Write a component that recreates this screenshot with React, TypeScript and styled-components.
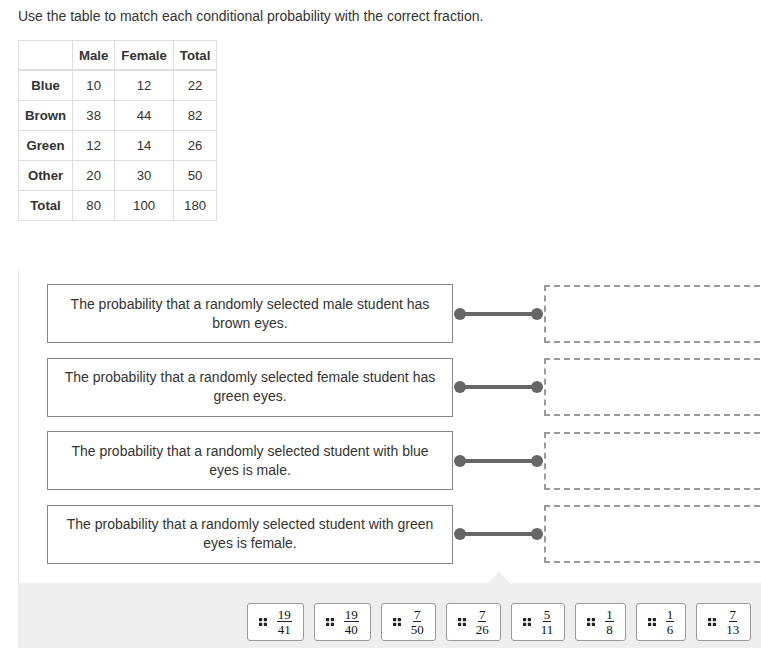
import styled, { createGlobalStyle } from "styled-components";

const GlobalStyle = createGlobalStyle`
  html, body {
    margin: 0;
    padding: 0;
    overflow: hidden;
    background: #fff;
  }
  body {
    font-family: "Liberation Sans", Arial, sans-serif;
    font-size: 14px;
    color: #333;
  }
`;

const Page = styled.div`
  padding: 7px 0 0 18px;
  width: 961px;
`;

const Prompt = styled.p`
  margin: 0;
  line-height: 18px;
`;

const Table = styled.table`
  margin-top: 15px;
  border-collapse: collapse;
  font-size: 13.2px;
  line-height: 18px;

  th, td {
    border: 1px solid #ddd;
    padding: 6px 6px 5px;
    text-align: center;
  }

  thead th {
    border-bottom: 2px solid #ddd;
    padding-bottom: 4px;
  }

  th {
    font-weight: bold;
  }
`;

const Matching = styled.div`
  margin-top: 48px;
  border-left: 1px solid #e9e9e9;
`;

const Rows = styled.div`
  display: flex;
  flex-direction: column;
  gap: 14.6px;
  padding: 15px 29px 19px 28px;
`;

const Row = styled.div`
  display: flex;
  align-items: center;
`;

const StatementBox = styled.div`
  box-sizing: border-box;
  width: 406px;
  height: 59px;
  border: 1px solid #888;
  padding: 0 15px;
  display: flex;
  align-items: center;
  justify-content: center;
  text-align: center;
  line-height: 19px;
`;

const Connector = styled.svg`
  display: block;
  flex: none;
`;

const DropZone = styled.div`
  box-sizing: border-box;
  width: 406px;
  height: 58px;
  border: 2px dashed #9a9a9a;
`;

const Tray = styled.div`
  position: relative;
  background: #eee;
  padding: 20px 0 24px;
  display: flex;
  justify-content: center;
  gap: 10px;

  &::before {
    content: "";
    position: absolute;
    left: 50%;
    top: -11px;
    margin-left: -11px;
    border-left: 11px solid transparent;
    border-right: 11px solid transparent;
    border-bottom: 11px solid #eee;
  }
`;

const Tile = styled.div`
  box-sizing: border-box;
  height: 38px;
  background: #fff;
  border: 1px solid #999;
  border-radius: 3px;
  display: flex;
  align-items: center;
  gap: 10px;
  padding: 0 11px 0 11px;
`;

const Frac = styled.span`
  display: inline-flex;
  flex-direction: column;
  align-items: center;
  font-family: "Liberation Serif", "DejaVu Serif", serif;
  font-size: 13px;
  line-height: 11px;
  color: #111;
`;

const Num = styled.span`
  padding: 0 1px 1px;
  border-bottom: 1px solid #222;
`;

const Den = styled.span`
  padding-top: 2px;
`;

const Grip = () => (
  <svg width="8" height="8" viewBox="0 0 8 8">
    <rect x="0" y="0" width="3.2" height="3.2" rx="0.6" fill="#222" />
    <rect x="4.8" y="0" width="3.2" height="3.2" rx="0.6" fill="#222" />
    <rect x="0" y="4.8" width="3.2" height="3.2" rx="0.6" fill="#222" />
    <rect x="4.8" y="4.8" width="3.2" height="3.2" rx="0.6" fill="#222" />
  </svg>
);

const Link = () => (
  <Connector width="91" height="14" viewBox="0 0 91 14">
    <line x1="7" y1="7" x2="84" y2="7" stroke="#666" strokeWidth="4" />
    <circle cx="7" cy="7" r="6" fill="#666" />
    <circle cx="84" cy="7" r="6" fill="#666" />
  </Connector>
);

const data = [
  ["Blue", 10, 12, 22],
  ["Brown", 38, 44, 82],
  ["Green", 12, 14, 26],
  ["Other", 20, 30, 50],
  ["Total", 80, 100, 180],
];

const statements = [
  "The probability that a randomly selected male student has brown eyes.",
  "The probability that a randomly selected female student has green eyes.",
  "The probability that a randomly selected student with blue eyes is male.",
  "The probability that a randomly selected student with green eyes is female.",
];

const fractions = [
  ["19", "41"],
  ["19", "40"],
  ["7", "50"],
  ["7", "26"],
  ["5", "11"],
  ["1", "8"],
  ["1", "6"],
  ["7", "13"],
];

export default function App() {
  return (
    <>
      <GlobalStyle />
      <Page>
        <Prompt>Use the table to match each conditional probability with the correct fraction.</Prompt>
        <Table>
          <thead>
            <tr>
              <th></th>
              <th>Male</th>
              <th>Female</th>
              <th>Total</th>
            </tr>
          </thead>
          <tbody>
            {data.map((r) => (
              <tr key={r[0]}>
                <th>{r[0]}</th>
                <td>{r[1]}</td>
                <td>{r[2]}</td>
                <td>{r[3]}</td>
              </tr>
            ))}
          </tbody>
        </Table>
        <Matching>
          <Rows>
            {statements.map((s) => (
              <Row key={s}>
                <StatementBox>{s}</StatementBox>
                <Link />
                <DropZone />
              </Row>
            ))}
          </Rows>
          <Tray>
            {fractions.map(([n, d], i) => (
              <Tile key={i}>
                <Grip />
                <Frac>
                  <Num>{n}</Num>
                  <Den>{d}</Den>
                </Frac>
              </Tile>
            ))}
          </Tray>
        </Matching>
      </Page>
    </>
  );
}
